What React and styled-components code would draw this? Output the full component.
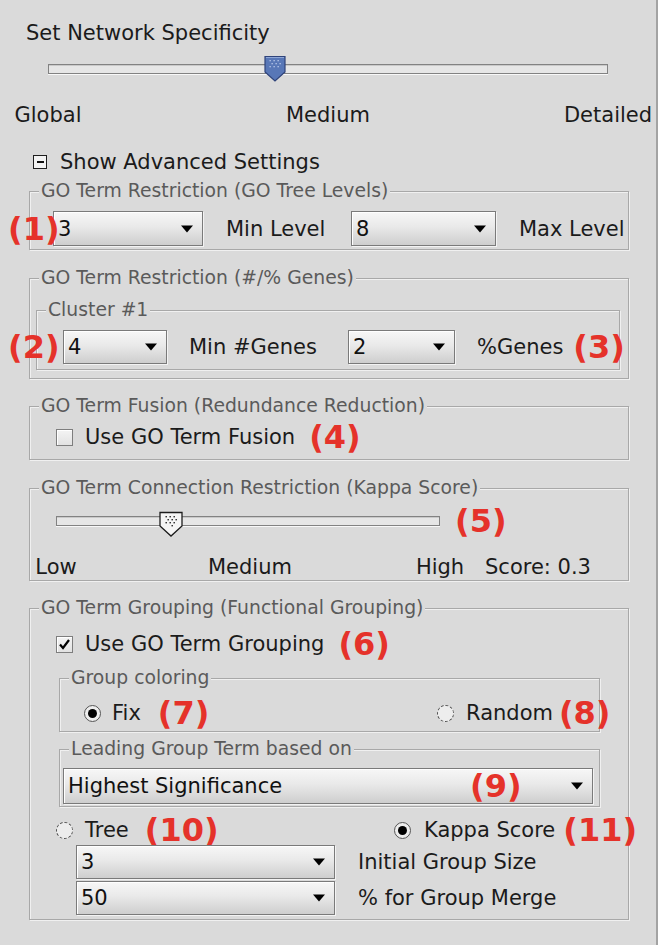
import React from 'react';
import styled, { createGlobalStyle, css } from 'styled-components';

const Global = createGlobalStyle`
  html, body { margin: 0; padding: 0; background: #ffffff; }
  body { font-family: "DejaVu Sans", "Liberation Sans", sans-serif; }
`;

const Panel = styled.div`
  width: 658px;
  height: 945px;
  box-sizing: border-box;
  background: #dadada;
  border-right: 2px solid #a3a3a3;
  padding-top: 21px;
  font-family: "DejaVu Sans", "Liberation Sans", sans-serif;
  font-size: 21px;
  color: #1b1b1b;
  display: flex;
  flex-direction: column;
`;

const Heading = styled.div`
  margin-left: 26px;
  line-height: 24px;
  height: 24px;
  white-space: nowrap;
`;

const SliderBox = styled.div`
  position: relative;
  margin-left: ${(p) => p.$left || 0}px;
  margin-top: ${(p) => p.$mt || 0}px;
  width: ${(p) => p.$width}px;
  height: 28px;
  display: flex;
  align-items: center;
  flex: none;
`;

const Track = styled.div`
  flex: 1;
  height: 10px;
  box-sizing: border-box;
  border: 1px solid #828282;
  background: #e6e6e6;
  box-shadow: inset 0 1px 0 #c9c9c9, 0 1px 0 #f8f8f8;
`;

const ThumbWrap = styled.div`
  position: absolute;
  top: ${(p) => p.$top}px;
  left: ${(p) => p.$pos}%;
  transform: translateX(-50%);
  line-height: 0;
`;

const Scale = styled.div`
  display: grid;
  grid-template-columns: ${(p) => p.$cols};
  margin-left: ${(p) => p.$left}px;
  margin-top: ${(p) => p.$mt}px;
  line-height: 24px;
  height: 24px;
  & > * {
    justify-self: center;
    white-space: nowrap;
  }
`;

const ScoreText = styled.span`
  && {
    justify-self: start;
  }
  margin-left: ${(p) => p.$ml}px;
`;

const ToggleRow = styled.div`
  display: flex;
  align-items: center;
  gap: 13px;
  margin: 23px 0 0 33px;
  line-height: 24px;
  height: 24px;
`;

const MinusBox = styled.span`
  width: 14px;
  height: 14px;
  box-sizing: border-box;
  border: 1px solid #1e1e1e;
  background: #f3f3f3;
  display: flex;
  align-items: center;
  justify-content: center;
  &::after {
    content: '';
    width: 7px;
    height: 2px;
    background: #111;
  }
`;

const Group = styled.fieldset`
  margin: ${(p) => p.$m};
  width: ${(p) => (p.$w ? `${p.$w}px` : 'auto')};
  box-sizing: border-box;
  padding: 0;
  min-width: 0;
  border: 1px solid #a8a8a8;
  box-shadow: inset 1px 1px 0 #f0f0f0, 1px 1px 0 #f0f0f0;
`;

const Title = styled.legend`
  margin-left: 9px;
  padding: 0 2px;
  font-size: 18.8px;
  line-height: 22px;
  color: #5a5a5a;
  background: #dadada;
  white-space: nowrap;
`;

const Body = styled.div`
  padding: ${(p) => p.$pad};
`;

const Row = styled.div`
  position: relative;
  display: grid;
  grid-template-columns: ${(p) => p.$cols};
  column-gap: ${(p) => p.$gap || 0}px;
  align-items: center;
  margin-top: ${(p) => p.$mt || 0}px;
  margin-left: ${(p) => p.$ml || 0}px;
  height: ${(p) => p.$h || 24}px;
  white-space: nowrap;
`;

const Line = styled.div`
  display: flex;
  align-items: center;
  height: ${(p) => p.$h || 24}px;
  margin-top: ${(p) => p.$mt || 0}px;
  white-space: nowrap;
`;

const Badge = styled.span`
  font-family: "DejaVu Sans", "Liberation Sans", sans-serif;
  font-weight: bold;
  font-size: 32px;
  line-height: 24px;
  color: #e5322a;
  white-space: nowrap;
  margin-left: ${(p) => p.$ml || 0}px;
  ${(p) =>
    p.$over !== undefined &&
    css`
      position: absolute;
      left: ${p.$over}px;
      top: 50%;
      transform: translateY(-50%);
      z-index: 1;
    `}
`;

const ComboBox = styled.div`
  box-sizing: border-box;
  width: ${(p) => p.$w}px;
  height: ${(p) => p.$h}px;
  margin-left: ${(p) => p.$ml || 0}px;
  border: 1px solid #7a7a7a;
  background: linear-gradient(#f7f7f7, #e9e9e9 45%, #cecece);
  box-shadow: inset 1px 1px 0 #ffffff, 1px 1px 0 #f3f3f3;
  display: flex;
  align-items: center;
  justify-content: space-between;
  padding: 0 9px 0 4px;
  color: #111;
  white-space: nowrap;
`;

const CheckBox = styled.span`
  width: 17px;
  height: 17px;
  box-sizing: border-box;
  border: 1px solid #7e7e7e;
  background: linear-gradient(#f4f4f4, #e2e2e2);
  box-shadow: inset 1px 1px 0 #ffffff;
  display: flex;
  align-items: center;
  justify-content: center;
  margin-right: 12px;
  flex: none;
`;

const Radio = styled.span`
  width: 17px;
  height: 17px;
  box-sizing: border-box;
  border-radius: 50%;
  border: 1px dashed #4e4e4e;
  background: #ededed;
  display: flex;
  align-items: center;
  justify-content: center;
  margin-right: ${(p) => p.$gap}px;
  flex: none;
  ${(p) =>
    p.$on &&
    css`
      border: 1px solid #555;
      &::after {
        content: '';
        width: 9px;
        height: 9px;
        border-radius: 50%;
        background: #000;
      }
    `}
`;

const Option = styled.div`
  display: flex;
  align-items: center;
`;

const LabelBadge = styled.div`
  display: flex;
  align-items: center;
`;

const Arrow = () => (
  <svg width="12" height="8" viewBox="0 0 12 8">
    <path d="M0 0.5H12L6 7.5Z" fill="#000" />
  </svg>
);

const Combo = ({ value, w, h, ml }) => (
  <ComboBox $w={w} $h={h} $ml={ml}>
    <span>{value}</span>
    <Arrow />
  </ComboBox>
);

const BlueThumb = () => (
  <svg width="23" height="27" viewBox="0 0 23 27">
    <path d="M1.5 1.5H21.5V17L11.5 26L1.5 17Z" fill="#5877b7" stroke="#2f437a" strokeWidth="1.2" />
    <path d="M2.5 2.5H20.5" stroke="#8ea6d6" strokeWidth="1" />
    {[
      [6, 5], [10, 5], [14, 5], [8, 8], [12, 8], [16, 8], [6, 11], [10, 11], [14, 11],
    ].map(([x, y], i) => (
      <rect key={i} x={x} y={y} width="1.3" height="1.3" fill="#b9c9ea" />
    ))}
  </svg>
);

const WhiteThumb = () => (
  <svg width="25" height="26" viewBox="0 0 25 26">
    <path d="M1.5 1.5H23.5V15L12.5 25L1.5 15Z" fill="#f5f5f5" stroke="#1c1c1c" strokeWidth="1.3" />
    {[
      [7, 5], [11, 5], [15, 5], [9, 8], [13, 8], [17, 8], [7, 11], [11, 11], [15, 11], [13, 14],
    ].map(([x, y], i) => (
      <rect key={i} x={x} y={y} width="1.4" height="1.4" fill="#222" />
    ))}
  </svg>
);

const Check = () => (
  <svg width="13" height="13" viewBox="0 0 13 13">
    <path d="M2 6.5L5 10L11 2" fill="none" stroke="#000" strokeWidth="2.2" />
  </svg>
);

export default function App() {
  return (
    <>
      <Global />
      <Panel>
        <Heading>Set Network Specificity</Heading>
        <SliderBox $left={48} $width={560} $mt={10}>
          <Track />
          <ThumbWrap $top={0} $pos={40.5}>
            <BlueThumb />
          </ThumbWrap>
        </SliderBox>
        <Scale $cols="80px 480px 80px" $left={8} $mt={20}>
          <span>Global</span>
          <span>Medium</span>
          <span>Detailed</span>
        </Scale>

        <ToggleRow>
          <MinusBox />
          <span>Show Advanced Settings</span>
        </ToggleRow>

        <Group $m="6px 0 0 29px" $w={600}>
          <Title>GO Term Restriction (GO Tree Levels)</Title>
          <Body $pad="9px 0 3px 23px">
            <Row $cols="150px 102px 145px auto" $gap={23} $h={35}>
              <Badge $over={-45}>(1)</Badge>
              <Combo value="3" w={150} h={35} />
              <span>Min Level</span>
              <Combo value="8" w={145} h={35} />
              <span>Max Level</span>
            </Row>
          </Body>
        </Group>

        <Group $m="17px 0 0 29px" $w={600}>
          <Title>GO Term Restriction (#/% Genes)</Title>
          <Body $pad="10px 8px 8px 6px">
            <Group $m="0">
              <Title>Cluster #1</Title>
              <Body $pad="9px 0 5px 26px">
                <Row $cols="104px 137px 107px auto" $gap={22} $h={34}>
                  <Badge $over={-55}>(2)</Badge>
                  <Combo value="4" w={104} h={34} />
                  <span>Min #Genes</span>
                  <Combo value="2" w={107} h={34} />
                  <LabelBadge>
                    <span>%Genes</span>
                    <Badge $ml={10}>(3)</Badge>
                  </LabelBadge>
                </Row>
              </Body>
            </Group>
          </Body>
        </Group>

        <Group $m="16px 0 0 29px" $w={600}>
          <Title>GO Term Fusion (Redundance Reduction)</Title>
          <Body $pad="6px 0 8px 26px">
            <Line $h={28}>
              <CheckBox />
              <span>Use GO Term Fusion</span>
              <Badge $ml={14}>(4)</Badge>
            </Line>
          </Body>
        </Group>

        <Group $m="17px 0 0 29px" $w={600}>
          <Title>GO Term Connection Restriction (Kappa Score)</Title>
          <Body $pad="8px 0 1px 0">
            <Line $h={28}>
              <SliderBox $left={26} $width={384}>
                <Track />
                <ThumbWrap $top={4} $pos={30}>
                  <WhiteThumb />
                </ThumbWrap>
              </SliderBox>
              <Badge $ml={15}>(5)</Badge>
            </Line>
            <Scale $cols="50px 338px 42px 1fr" $left={1} $mt={20}>
              <span>Low</span>
              <span>Medium</span>
              <span>High</span>
              <ScoreText $ml={24}>Score: 0.3</ScoreText>
            </Scale>
          </Body>
        </Group>

        <Group $m="16px 0 0 29px" $w={600}>
          <Title>GO Term Grouping (Functional Grouping)</Title>
          <Body $pad="13px 0 4px 26px">
            <Line $h={24}>
              <CheckBox>
                <Check />
              </CheckBox>
              <span>Use GO Term Grouping</span>
              <Badge $ml={14}>(6)</Badge>
            </Line>

            <Group $m="11px 0 0 3px" $w={541}>
              <Title>Group coloring</Title>
              <Body $pad="10px 0 4px 24px">
                <Row $cols="353px auto" $h={28}>
                  <Option>
                    <Radio $on $gap={11} />
                    <span>Fix</span>
                    <Badge $ml={17}>(7)</Badge>
                  </Option>
                  <Option>
                    <Radio $gap={12} />
                    <span>Random</span>
                    <Badge $ml={6}>(8)</Badge>
                  </Option>
                </Row>
              </Body>
            </Group>

            <Group $m="6px 0 0 3px" $w={541}>
              <Title>Leading Group Term based on</Title>
              <Body $pad="8px 0 2px 3px">
                <Row $cols="auto" $h={36}>
                  <Badge $over={407}>(9)</Badge>
                  <Combo value="Highest Significance" w={530} h={36} />
                </Row>
              </Body>
            </Group>

            <Row $cols="338px auto" $mt={11} $h={24}>
              <Option>
                <Radio $gap={12} />
                <span>Tree</span>
                <Badge $ml={16}>(10)</Badge>
              </Option>
              <Option>
                <Radio $on $gap={13} />
                <span>Kappa Score</span>
                <Badge $ml={8}>(11)</Badge>
              </Option>
            </Row>

            <Row $cols="259px auto" $gap={23} $ml={20} $mt={3} $h={34}>
              <Combo value="3" w={259} h={34} />
              <span>Initial Group Size</span>
            </Row>
            <Row $cols="259px auto" $gap={23} $ml={20} $mt={2} $h={34}>
              <Combo value="50" w={259} h={34} />
              <span>% for Group Merge</span>
            </Row>
          </Body>
        </Group>
      </Panel>
    </>
  );
}
